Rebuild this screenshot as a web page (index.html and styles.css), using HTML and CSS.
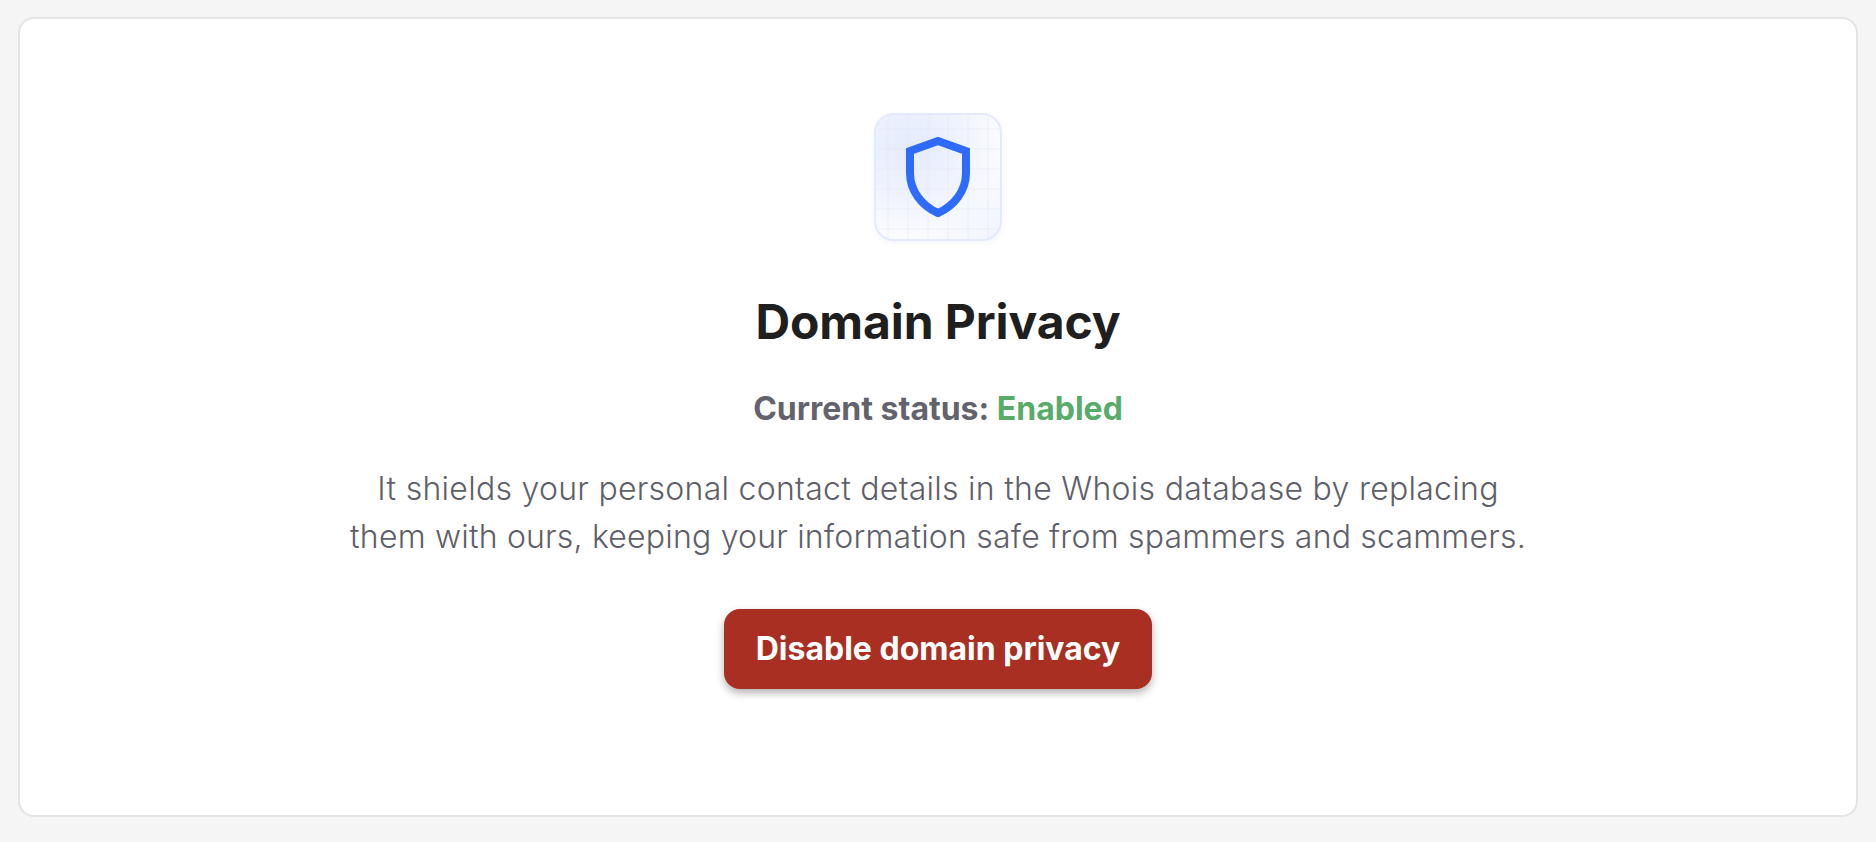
FILE: index.html
```html
<!DOCTYPE html>
<html lang="en">
<head>
<meta charset="utf-8">
<title>Domain Privacy</title>
<link rel="stylesheet" href="styles.css">
</head>
<body>
<main class="card">
  <div class="icon-tile">
    <svg class="shield" width="64" height="80" viewBox="0 0 64 80" fill="none">
      <path d="M32 4 L60 14 V36 C60 54 48 69 32 76 C16 69 4 54 4 36 V14 Z" stroke="#2e6bfb" stroke-width="8"/>
    </svg>
  </div>
  <h1 class="title">Domain Privacy</h1>
  <p class="status">Current status: <span class="enabled">Enabled</span></p>
  <p class="desc"><span class="line-one">It shields your personal contact details in the Whois database by replacing</span><br>them with ours, keeping your information safe from spammers and scammers.</p>
  <button class="btn" type="button">Disable domain privacy</button>
</main>
</body>
</html>
```
FILE: styles.css
```css
* { box-sizing: border-box; }
html, body { margin: 0; height: 100%; }
body {
  background: #f5f5f5;
  font-family: Inter, "Liberation Sans", sans-serif;
  padding: 17px 18px 25px;
}
.card {
  width: 1840px;
  height: 800px;
  background: #fff;
  border: 2px solid #e4e4e7;
  border-radius: 16px;
  display: flex;
  flex-direction: column;
  align-items: center;
  padding-top: 94px;
}
.icon-tile {
  width: 128px;
  height: 128px;
  border: 2px solid #e3eafc;
  border-radius: 20px;
  display: flex;
  align-items: center;
  justify-content: center;
  background-color: #fff;
  background-image:
    linear-gradient(rgba(225,228,238,.24) 2px, transparent 2px),
    linear-gradient(90deg, rgba(225,228,238,.24) 2px, transparent 2px),
    radial-gradient(circle at 100% 100%, #f1f4fe 0%, rgba(241,244,254,0) 45%),
    radial-gradient(circle at 28% 25%, #e4ebfd 0%, #eef2fe 35%, #fbfcff 72%, #fff 100%);
  background-size: 20px 20px, 20px 20px, 100% 100%, 100% 100%;
  background-position: 11px 13px, 11px 13px, 0 0, 0 0;
  box-shadow: 0 2px 6px rgba(30,50,120,.05);
}
.title {
  margin: 52px 0 0;
  font-size: 48px;
  line-height: 58px;
  font-weight: 700;
  letter-spacing: -0.1px;
  color: #1f1f1f;
}
.status {
  margin: 38px 0 0;
  font-size: 32px;
  line-height: 40px;
  font-weight: 700;
  color: #63636d;
}
.enabled { color: #58ab69; }
.desc {
  margin: 36px 0 0;
  font-size: 32px;
  line-height: 48px;
  font-weight: 300;
  letter-spacing: 0.2px;
  color: #5f5f6a;
  text-align: center;
}
.line-one { letter-spacing: 0.28px; }
.btn {
  margin-top: 48px;
  width: 428px;
  height: 80px;
  border: 0;
  border-radius: 16px;
  padding: 0 0 2px;
  background: #a82f21;
  color: #fff;
  font-family: inherit;
  font-size: 32px;
  font-weight: 700;
  box-shadow: 0 4px 8px rgba(0,0,0,.3);
}
```
